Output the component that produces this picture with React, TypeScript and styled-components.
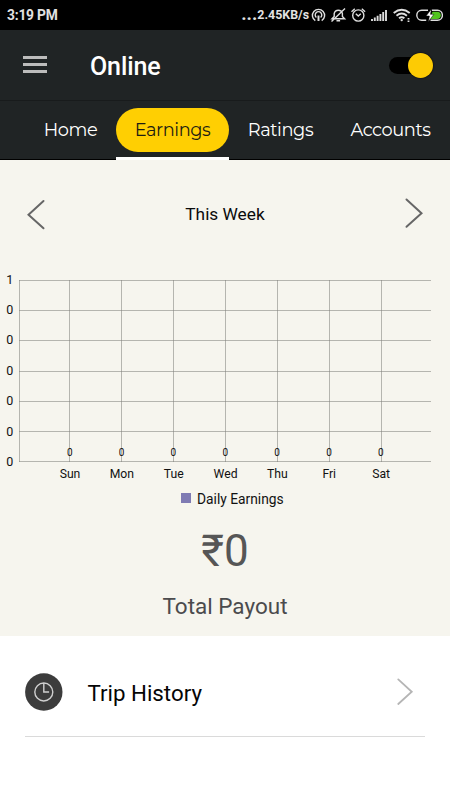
import React from 'react';
import styled, { createGlobalStyle } from 'styled-components';

const GlobalStyle = createGlobalStyle`
  * { box-sizing: border-box; }
  html, body { margin: 0; background: #fff; }
  body { font-family: Roboto, "Noto Sans", sans-serif; overflow: hidden; }
  svg { display: block; flex: none; }
`;

const Screen = styled.div`
  width: 450px;
  height: 800px;
  display: flex;
  flex-direction: column;
  background: #fff;
  overflow: hidden;
`;

const StatusBar = styled.div`
  height: 30px;
  flex: none;
  display: flex;
  align-items: center;
  justify-content: space-between;
  padding: 0 7px 0 7px;
  background: #000;
  color: #e2e2e2;
  font-weight: 700;
`;

const Clock = styled.span`
  font-size: 13.8px;
  line-height: 20px;
  letter-spacing: -0.2px;
`;

const StatusRight = styled.div`
  display: flex;
  align-items: center;
`;

const Speed = styled.span`
  display: flex;
  align-items: center;
  font-size: 12.4px;
  line-height: 20px;
  margin-right: 1px;
  white-space: nowrap;
`;

const Dots = styled.span`
  font-size: 18.5px;
  line-height: 16px;
  padding-bottom: 2px;
`;

const Toolbar = styled.header`
  height: 71px;
  flex: none;
  display: flex;
  align-items: center;
  padding: 0 17px 0 23px;
  background: #202425;
  border-bottom: 1px solid #181b1c;
`;

const MenuIcon = styled.div`
  width: 24px;
  display: grid;
  gap: 4px;
  margin: 0 43px 1px 0;
`;

const MenuLine = styled.span`
  height: 3px;
  background: #bcbcbc;
`;

const Title = styled.h1`
  margin: 3px auto 0 0;
  font-size: 25px;
  line-height: 30px;
  font-weight: 500;
  letter-spacing: -0.1px;
  color: #fff;
`;

const Track = styled.div`
  width: 44px;
  height: 17px;
  border-radius: 9px;
  display: flex;
  align-items: center;
  justify-content: flex-end;
  background: #000;
`;

const Knob = styled.span`
  width: 25px;
  height: 25px;
  flex: none;
  border-radius: 50%;
  background: #fdcb04;
  box-shadow: 0 0 2px #000;
`;

const Tabs = styled.nav`
  height: 59px;
  flex: none;
  display: flex;
  padding-left: 25px;
  background: #202425;
  box-shadow: inset 0 -1px #000;
`;

const Tab = styled.div<{ $width: number; $active?: boolean }>`
  width: ${p => p.$width}px;
  padding-top: 7px;
  border-bottom: 3px solid ${p => (p.$active ? '#fff' : 'transparent')};
`;

const TabLabel = styled.span<{ $active?: boolean }>`
  display: flex;
  align-items: center;
  justify-content: center;
  height: 44px;
  padding-bottom: 2px;
  border-radius: 22px;
  background: ${p => (p.$active ? '#ffcf02' : 'transparent')};
  color: ${p => (p.$active ? '#1d1d12' : '#fff')};
  font-family: Montserrat, Lato, sans-serif;
  font-size: 17.8px;
  letter-spacing: -0.4px;
`;

const Summary = styled.main`
  height: 476px;
  flex: none;
  display: flex;
  flex-direction: column;
  background: #f6f5ee;
`;

const WeekPicker = styled.div`
  height: 110px;
  flex: none;
  display: flex;
  align-items: center;
  justify-content: space-between;
  padding: 0 26px 2px;
`;

const WeekLabel = styled.span`
  font-size: 17.3px;
  line-height: 22px;
  color: #0b0b0b;
`;

const ChartText = styled.text<{ $size: number }>`
  font-family: Roboto, sans-serif;
  font-size: ${p => p.$size}px;
  fill: #111;
`;

const Amount = styled.div`
  margin-top: 13px;
  text-align: center;
  font-size: 44px;
  line-height: 56px;
  color: #565656;
`;

const Caption = styled.div`
  margin-top: 12px;
  text-align: center;
  font-size: 22.5px;
  line-height: 30px;
  color: #4b4b4d;
`;

const HistoryRow = styled.div`
  height: 101px;
  flex: none;
  margin: 0 25px;
  display: flex;
  align-items: center;
  padding: 12px 11px 0 0;
  border-bottom: 1px solid #dadada;
`;

const HistoryLabel = styled.span`
  margin: 1px auto 0 24.5px;
  font-size: 22.3px;
  line-height: 28px;
  color: #050505;
`;

const tabs = [
  { name: 'Home', width: 91 },
  { name: 'Earnings', width: 113, active: true },
  { name: 'Ratings', width: 103 },
  { name: 'Accounts', width: 117 },
];

const days = ['Sun', 'Mon', 'Tue', 'Wed', 'Thu', 'Fri', 'Sat'];
const levels = [
  { label: '1', y: 280 },
  { label: '0', y: 310 },
  { label: '0', y: 340 },
  { label: '0', y: 371 },
  { label: '0', y: 401 },
  { label: '0', y: 431 },
  { label: '0', y: 461 },
];

function StatusIcons() {
  return (
    <svg width="133" height="20" viewBox="310 5.5 133 20" fill="none" stroke="#dedede" strokeWidth="1.4">
      <path d="M315.3 21.2a6.1 6.1 0 1 1 6.4 0M316.4 18a3.3 3.3 0 1 1 4.2 0" />
      <path d="M318.5 16v5.5" strokeWidth="2" />
      <path d="M332 19.2l2.2-2.2v-3a4.2 4.2 0 0 1 8.2 0v3l2.2 2.2h-12.6zM336.5 21.2h3.6M345 9l-13.5 13" />
      <circle cx="358.3" cy="16" r="5.6" />
      <path d="M355.8 14.3l2.5 2.3 2.5-2.3M351.5 12.3l3.3-3M365.1 12.3l-3.3-3" />
      <path d="M372 21.5v-2M374.8 21.5v-3.5M377.6 21.5v-5.2M380.4 21.5v-7M383.2 21.5v-9M386 21.5v-11" strokeWidth="1.9" />
      <path d="M393.7 13.5q8-6.5 16 0M396.5 16.2q5.2-4.4 10.4 0M399 18.8q2.7-2.1 5.4 0" strokeWidth="1.9" />
      <circle cx="401.7" cy="20.6" r="1.2" fill="#dedede" stroke="none" />
      <path d="M408.5 18.5v4" strokeWidth="1.8" strokeDasharray="1.5 1" />
      <path d="M428 10.8h-6.3a5 5 0 0 0-4.9 5 5 5 0 0 0 4.9 5h4.5M432 10.8h5.5a5 5 0 0 1 4.9 5 5 5 0 0 1-4.9 5h-7" />
      <path d="M432.5 12.2h4.7a3.6 3.6 0 0 1 0 7.2h-7z" fill="#51c51d" stroke="none" />
      <path d="M431.5 9.5l-5.5 7h3.4l-1 5.7 5.5-7.4h-3.4z" fill="#fff" stroke="#000" strokeWidth=".5" />
    </svg>
  );
}

function Chevron({ left = false, color = '#666', width = 20, height = 32 }) {
  return (
    <svg width={width} height={height} viewBox="0 0 20 32" fill="none">
      <path d={left ? 'M17.5 3L2.5 16.7l15 13.6' : 'M2.5 1.5L17.5 15.2 2.5 28.8'} stroke={color} strokeWidth="2" strokeLinecap="round" />
    </svg>
  );
}

function EarningsChart() {
  return (
    <svg width="450" height="240" viewBox="0 270 450 240">
      <g stroke="#7f7f7b" strokeOpacity=".55" strokeWidth="1">
        {levels.map(({ y }) => (
          <path key={y} d={`M19 ${y}.5H431`} />
        ))}
        <path d="M19.5 280V462" />
        {days.map((day, i) => (
          <path key={day} d={`M${69 + i * 52}.5 280V462`} />
        ))}
      </g>
      {levels.map(({ label, y }, i) => (
        <ChartText key={y} $size={12.5} x="13.3" y={283.7 + i * 30.36} textAnchor="end">{label}</ChartText>
      ))}
      {days.map((day, i) => (
        <React.Fragment key={day}>
          <ChartText $size={10} x={69.7 + i * 51.85} y="456.4" textAnchor="middle">0</ChartText>
          <ChartText $size={12.2} x={70 + i * 51.85} y="478.4" textAnchor="middle">{day}</ChartText>
        </React.Fragment>
      ))}
      <rect x="181" y="493" width="10" height="10" fill="#7f7bb3" />
      <ChartText $size={13.8} x="197" y="503.8">Daily Earnings</ChartText>
    </svg>
  );
}

function ClockBadge() {
  return (
    <svg width="38" height="38" viewBox="0 0 38 38" fill="none">
      <circle cx="18.8" cy="19" r="18.7" fill="#3c3c3c" />
      <circle cx="18.8" cy="19" r="9" stroke="#d0d0d0" strokeWidth="1.4" />
      <path d="M18.8 10v9h5.3" stroke="#d0d0d0" strokeWidth="1.4" />
    </svg>
  );
}

export default function App() {
  return (
    <>
      <GlobalStyle />
      <Screen>
        <StatusBar>
          <Clock>3:19 PM</Clock>
          <StatusRight>
            <Speed><Dots>...</Dots>2.45KB/s</Speed>
            <StatusIcons />
          </StatusRight>
        </StatusBar>
        <Toolbar>
          <MenuIcon><MenuLine /><MenuLine /><MenuLine /></MenuIcon>
          <Title>Online</Title>
          <Track><Knob /></Track>
        </Toolbar>
        <Tabs>
          {tabs.map(t => (
            <Tab key={t.name} $width={t.width} $active={t.active}>
              <TabLabel $active={t.active}>{t.name}</TabLabel>
            </Tab>
          ))}
        </Tabs>
        <Summary>
          <WeekPicker>
            <Chevron left />
            <WeekLabel>This Week</WeekLabel>
            <Chevron />
          </WeekPicker>
          <EarningsChart />
          <Amount>₹0</Amount>
          <Caption>Total Payout</Caption>
        </Summary>
        <HistoryRow>
          <ClockBadge />
          <HistoryLabel>Trip History</HistoryLabel>
          <Chevron color="#b5b5b5" width={18} height={29} />
        </HistoryRow>
      </Screen>
    </>
  );
}
